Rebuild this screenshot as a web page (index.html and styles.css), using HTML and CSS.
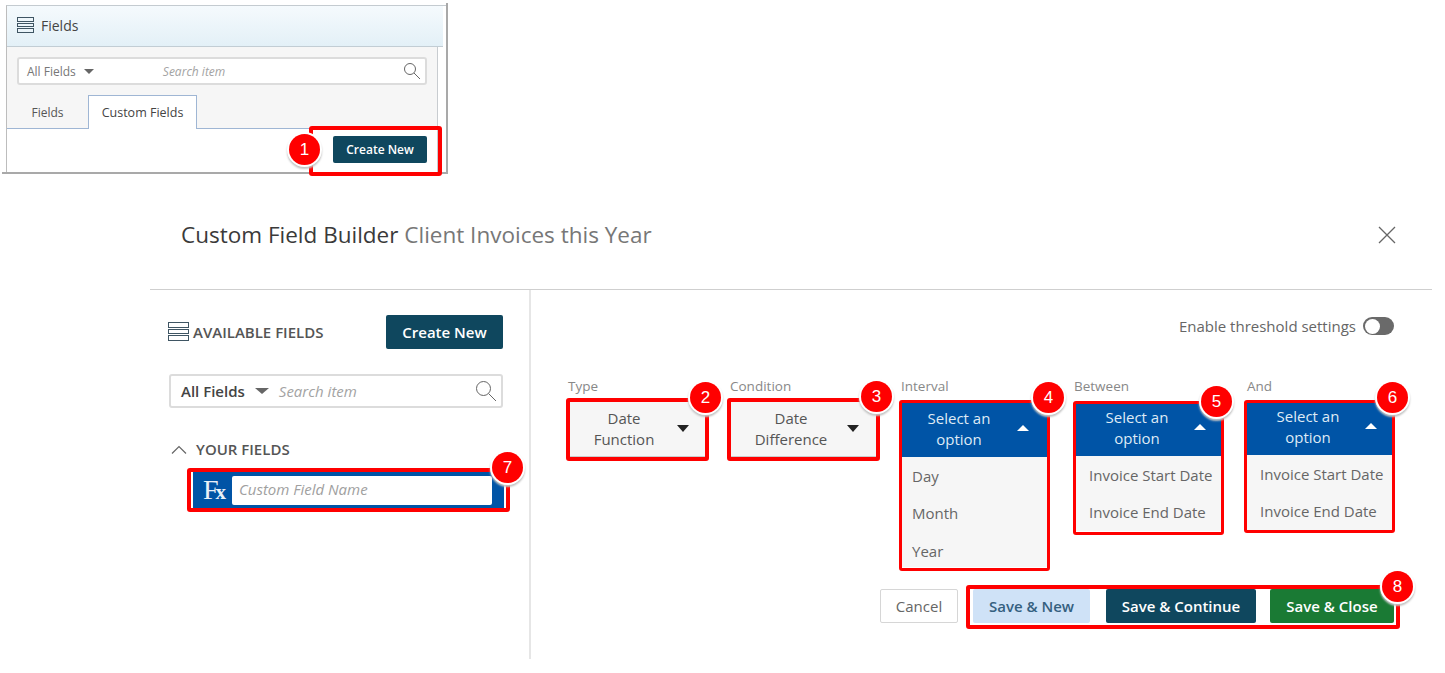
FILE: index.html
```html
<!DOCTYPE html>
<html lang="en">
<head>
<meta charset="utf-8">
<title>Custom Field Builder</title>
<link rel="stylesheet" href="styles.css">
</head>
<body>
<div class="page">
  <section class="panel">
    <div class="panel-inner">
      <header class="panel-head">
        <svg class="list-icon" width="17" height="17" viewBox="0 0 17 17"><rect x="0.5" y="0.5" width="16" height="4"/><rect x="0.5" y="6.5" width="16" height="3"/><rect x="0.5" y="11.5" width="16" height="4"/></svg>
        <span>Fields</span>
      </header>
      <div class="panel-body">
        <div class="search search-small">
          <span class="search-scope">All Fields</span><i class="caret-grey"></i>
          <span class="search-hint">Search item</span>
          <svg class="search-icon" width="18" height="18" viewBox="0 0 18 18"><circle cx="7" cy="7" r="5.5"/><path d="M11 11L17 17"/></svg>
        </div>
        <div class="tabs">
          <span class="tab">Fields</span>
          <span class="tab tab-active">Custom Fields</span>
        </div>
      </div>
      <div class="panel-foot"><button class="btn btn-dark btn-small">Create New</button></div>
    </div>
  </section>

  <section class="dialog">
    <header class="dialog-head">
      <h1 class="dialog-title">Custom Field Builder <span>Client Invoices this Year</span></h1>
      <svg class="close" width="18" height="18" viewBox="0 0 18 18"><path d="M1 1L17 17M17 1L1 17"/></svg>
    </header>
    <div class="dialog-body">
      <aside class="side">
        <div class="side-top">
          <svg class="list-icon list-icon-large" width="21" height="21" viewBox="0 0 21 21"><rect x="0.5" y="0.5" width="20" height="5"/><rect x="0.5" y="7.5" width="20" height="4"/><rect x="0.5" y="13.5" width="20" height="5"/></svg>
          <span class="side-title">AVAILABLE FIELDS</span>
          <button class="btn btn-dark btn-create">Create New</button>
        </div>
        <div class="search search-large">
          <span class="search-scope">All Fields</span><i class="caret-grey"></i>
          <span class="search-hint">Search item</span>
          <svg class="search-icon" width="22" height="22" viewBox="0 0 22 22"><circle cx="8.5" cy="8.5" r="7"/><path d="M13.5 13.5L21 21"/></svg>
        </div>
        <div class="your-fields">
          <svg class="chevron" width="16" height="9" viewBox="0 0 16 9"><path d="M1 8.5L8 1.5L15 8.5"/></svg>
          <span>YOUR FIELDS</span>
        </div>
        <div class="field-row">
          <span class="fx">F<b>x</b></span>
          <span class="field-input">Custom Field Name</span>
        </div>
      </aside>
      <main class="builder">
        <div class="threshold">
          <span>Enable threshold settings</span>
          <span class="toggle"></span>
        </div>
        <div class="selects">
          <div class="col col-type">
            <label class="col-label">Type</label>
            <div class="select select-closed"><span class="select-text">Date<br>Function</span><i class="caret-down"></i></div>
          </div>
          <div class="col col-cond">
            <label class="col-label">Condition</label>
            <div class="select select-closed"><span class="select-text">Date<br>Difference</span><i class="caret-down"></i></div>
          </div>
          <div class="col col-int">
            <label class="col-label">Interval</label>
            <div class="select select-open"><span class="select-text">Select an<br>option</span><i class="caret-up"></i></div>
            <ul class="menu menu-int"><li>Day</li><li>Month</li><li>Year</li></ul>
          </div>
          <div class="col col-btw">
            <label class="col-label">Between</label>
            <div class="select select-open"><span class="select-text">Select an<br>option</span><i class="caret-up"></i></div>
            <ul class="menu"><li>Invoice Start Date</li><li>Invoice End Date</li></ul>
          </div>
          <div class="col col-and">
            <label class="col-label">And</label>
            <div class="select select-open"><span class="select-text">Select an<br>option</span><i class="caret-up"></i></div>
            <ul class="menu"><li>Invoice Start Date</li><li>Invoice End Date</li></ul>
          </div>
        </div>
        <div class="actions">
          <button class="btn btn-cancel">Cancel</button>
          <button class="btn btn-new">Save &amp; New</button>
          <button class="btn btn-dark btn-continue">Save &amp; Continue</button>
          <button class="btn btn-green">Save &amp; Close</button>
        </div>
      </main>
    </div>
  </section>

  <div class="frame frame-1"></div>
  <div class="frame frame-2"></div>
  <div class="frame frame-3"></div>
  <div class="frame frame-4"></div>
  <div class="frame frame-5"></div>
  <div class="frame frame-6"></div>
  <div class="frame frame-7"></div>
  <div class="frame frame-8"></div>
  <span class="badge badge-1">1</span>
  <span class="badge badge-2">2</span>
  <span class="badge badge-3">3</span>
  <span class="badge badge-4">4</span>
  <span class="badge badge-5">5</span>
  <span class="badge badge-6">6</span>
  <span class="badge badge-7">7</span>
  <span class="badge badge-8">8</span>
</div>
</body>
</html>
```
FILE: styles.css
```css
* { box-sizing: border-box; }
html, body { margin: 0; padding: 0; background: #fff; }
body { font-family: "Open Sans", "Liberation Sans", sans-serif; color: #555; overflow: hidden; }
.page { position: relative; width: 1445px; height: 673px; overflow: hidden; padding-top: 5px; }

/* top panel */
.panel { width: 441px; height: 169px; margin-left: 6px; border-top: 1px solid #c4cbd0; border-left: 1px solid #bdbdbd; position: relative; }
.panel::before { content: ""; position: absolute; left: -5px; right: -1px; bottom: 0; height: 2px; background: #a9a9a9; }
.panel::after { content: ""; position: absolute; right: -1px; top: -3px; bottom: 0; width: 2px; background: #a9a9a9; }
.panel-inner { width: 431px; height: 100%; border-right: 1px solid #c8ccd0; }
.panel-head { width: 436px; height: 41px; display: flex; align-items: center; gap: 7px; padding: 0 0 2px 10px; background: linear-gradient(#f5fafd, #e3f0f7); border-bottom: 1px solid #c2cdd4; font-size: 14px; color: #444; }
.panel-body { height: 82px; background: #f6f6f6; border-bottom: 1px solid #9fb6d4; padding-top: 10px; position: relative; }
.panel-foot { height: 44px; background: #fff; display: flex; justify-content: flex-end; padding: 7px 10px 0 0; }
.list-icon { fill: none; stroke: #3f5563; stroke-width: 1; flex: none; }

.search { display: flex; align-items: center; background: #fff; border: 2px solid #dcdcdc; border-radius: 3px; position: relative; }
.search-small { width: 410px; height: 28px; margin-left: 10px; padding-left: 8px; font-size: 12px; color: #777; }
.search-small .search-hint { margin-left: 69px; font-size: 12px; }
.search-small .search-icon { position: absolute; right: 4px; top: 3px; }
.search-scope { flex: none; }
.caret-grey { flex: none; width: 0; height: 0; margin-left: 8px; border-left: 5px solid transparent; border-right: 5px solid transparent; border-top: 5px solid #666; }
.search-hint { font-style: italic; color: #a3a3a3; }
.search-icon { fill: none; stroke: #666; stroke-width: 1; }

.tabs { position: absolute; left: 0; bottom: -1px; display: flex; height: 34px; }
.tab { display: flex; align-items: center; justify-content: center; width: 81px; font-size: 12px; color: #555; }
.tab-active { width: 109px; background: #fff; border: 1px solid #9fb6d4; border-bottom: 0; color: #444; font-size: 12.5px; }

.btn { display: flex; align-items: center; justify-content: center; padding: 0; border: 0; border-radius: 2px; font-family: inherit; font-weight: 600; white-space: nowrap; }
.btn-dark { background: #0f475e; color: #fff; }
.btn-small { width: 94px; height: 27px; font-size: 12px; }

/* dialog */
.dialog { margin-left: 150px; width: 1282px; }
.dialog-head { height: 117px; padding: 7px 36px 0 31px; display: flex; align-items: center; justify-content: space-between; border-bottom: 1px solid #cfcfcf; margin-top: -1px; }
.dialog-title { margin: 0; font-size: 22.5px; font-weight: 400; color: #3a3a3a; }
.dialog-title span { color: #777; }
.close { fill: none; stroke: #666; stroke-width: 1.3; }
.dialog-body { display: flex; height: 369px; }

.side { width: 381px; border-right: 2px solid #e6e6e6; padding: 25px 26px 0 18px; flex: none; }
.side-top { display: flex; align-items: center; height: 34px; }
.list-icon-large { margin-right: 4px; }
.side-title { font-size: 15px; font-weight: 600; color: #555; }
.btn-create { width: 117px; height: 34px; margin-left: auto; font-size: 15px; }
.search-large { width: 334px; height: 34px; margin: 25px 0 0 1px; padding-left: 10px; font-size: 15px; font-weight: 600; color: #444; }
.search-large .caret-grey { margin-left: 10px; border-left-width: 7px; border-right-width: 7px; border-top-width: 6px; }
.search-large .search-hint { margin-left: 10px; font-size: 15px; font-weight: 400; }
.search-large .search-icon { position: absolute; right: 4px; top: 4px; }
.your-fields { display: flex; align-items: center; gap: 9px; margin: 30px 0 0 3px; height: 22px; font-size: 15px; font-weight: 600; color: #555; }
.chevron { fill: none; stroke: #666; stroke-width: 1.2; }
.field-row { display: flex; align-items: center; width: 311px; height: 36px; margin: 12px 0 0 25px; background: #0054a6; padding-left: 10px; }
.fx { flex: none; width: 29px; color: #e8f0f8; font-family: "Liberation Serif", serif; font-size: 28px; line-height: 1; letter-spacing: -3px; }
.fx b { font-size: 21px; letter-spacing: 0; }
.field-input { width: 260px; height: 29px; display: flex; align-items: center; padding: 0 0 2px 7px; background: #fff; border-radius: 2px; font-size: 15px; font-style: italic; color: #a0a0a0; }

.builder { flex: 1; padding: 26px 38px 0 37px; }
.threshold { display: flex; align-items: center; justify-content: flex-end; gap: 7px; height: 20px; font-size: 15px; color: #666; }
.toggle { width: 31px; height: 18px; border-radius: 9px; background: #6a6a6a; position: relative; }
.toggle::before { content: ""; position: absolute; left: 2px; top: 1.5px; width: 15px; height: 15px; border-radius: 50%; background: #fff; }
.selects { display: flex; margin-top: 42px; align-items: flex-start; }
.col { flex: none; }
.col-label { display: block; height: 24px; font-size: 13.5px; line-height: 16px; color: #888; }
.col-type { width: 163px; }
.col-cond { width: 171px; margin-left: -1px; }
.col-int { width: 173px; }
.col-btw { width: 173px; }
.col-and { width: 145px; }
.select { display: flex; align-items: center; font-size: 15px; line-height: 21px; text-align: center; position: relative; }
.select-text { flex: 1; }
.select-closed { width: 136px; height: 55px; margin-left: 1px; background: #f6f6f6; border-bottom: 1px solid #ccc; color: #555; padding-right: 26px; }
.col-cond .select-closed { width: 145px; padding-right: 25px; }
.select-open { width: 145px; height: 53px; background: #0054a6; color: #dfeaf5; padding: 0 23px 4px 0; }
.col-int .select-open { width: 146px; height: 55px; padding: 0 30px 2px 0; }
.col-btw .select-open { margin: 1px 0 0 2px; }
.caret-down, .caret-up { position: absolute; right: 16px; top: 50%; width: 0; height: 0; border-left: 6.5px solid transparent; border-right: 6.5px solid transparent; margin-top: -4.5px; }
.col-cond .caret-down { right: 17px; }
.caret-down { border-top: 7px solid #222; }
.caret-up { border-bottom: 6px solid #fff; right: 15px; margin-top: -5.5px; }
.col-int .caret-up { right: 18px; margin-top: -4.5px; }
.menu { list-style: none; margin: 0; width: 145px; height: 75px; padding: 0 0 0 13px; background: #f6f6f6; font-size: 15px; color: #666; }
.menu li { height: 37px; display: flex; align-items: center; white-space: nowrap; }
.col-btw .menu { margin-left: 2px; }
.menu-int { width: 146px; height: 110px; padding-left: 11px; }
.menu-int li { height: 37.5px; }
.actions { display: flex; justify-content: flex-end; margin-top: 22px; height: 34px; }
.actions .btn { height: 34px; font-size: 15px; }
.btn-cancel { width: 78px; margin-right: 15px; background: #fff; border: 1px solid #d6d6d6; color: #666; }
.actions .btn-cancel { font-weight: 400; }
.btn-new { width: 117px; margin-right: 16px; background: #cfe2f7; color: #35607f; }
.btn-continue { width: 150px; margin-right: 14px; }
.btn-green { width: 124px; background: #1a7a34; color: #fff; }

/* annotation overlays */
.frame { position: absolute; border: 4px solid #f00; border-radius: 3px; pointer-events: none; }
.frame-1 { left: 309px; top: 126px; width: 133px; height: 50px; }
.frame-2 { left: 566px; top: 398px; width: 143px; height: 63px; }
.frame-3 { left: 727px; top: 398px; width: 153px; height: 63px; }
.frame-4 { left: 899px; top: 400px; width: 151px; height: 171px; border-width: 3px; }
.frame-5 { left: 1073px; top: 401px; width: 151px; height: 134px; border-width: 3px; }
.frame-6 { left: 1244px; top: 400px; width: 151px; height: 133px; border-width: 3px; }
.frame-7 { left: 187px; top: 468px; width: 323px; height: 44px; }
.frame-8 { left: 966px; top: 585px; width: 434px; height: 44px; }
.badge { position: absolute; width: 31px; height: 31px; border-radius: 50%; background: #f00; color: #fff; font-family: "Liberation Sans", sans-serif; font-size: 17px; line-height: 31px; text-align: center; box-shadow: 0 0 0 2px #fff, 0 2px 2px 2px #c4c4c4; }
.badge-1 { left: 289px; top: 134px; }
.badge-2 { left: 690px; top: 382px; }
.badge-3 { left: 861px; top: 381px; }
.badge-4 { left: 1033px; top: 382px; }
.badge-5 { left: 1201px; top: 386px; }
.badge-6 { left: 1377px; top: 382px; }
.badge-7 { left: 492px; top: 452px; }
.badge-8 { left: 1382px; top: 571px; }
```
